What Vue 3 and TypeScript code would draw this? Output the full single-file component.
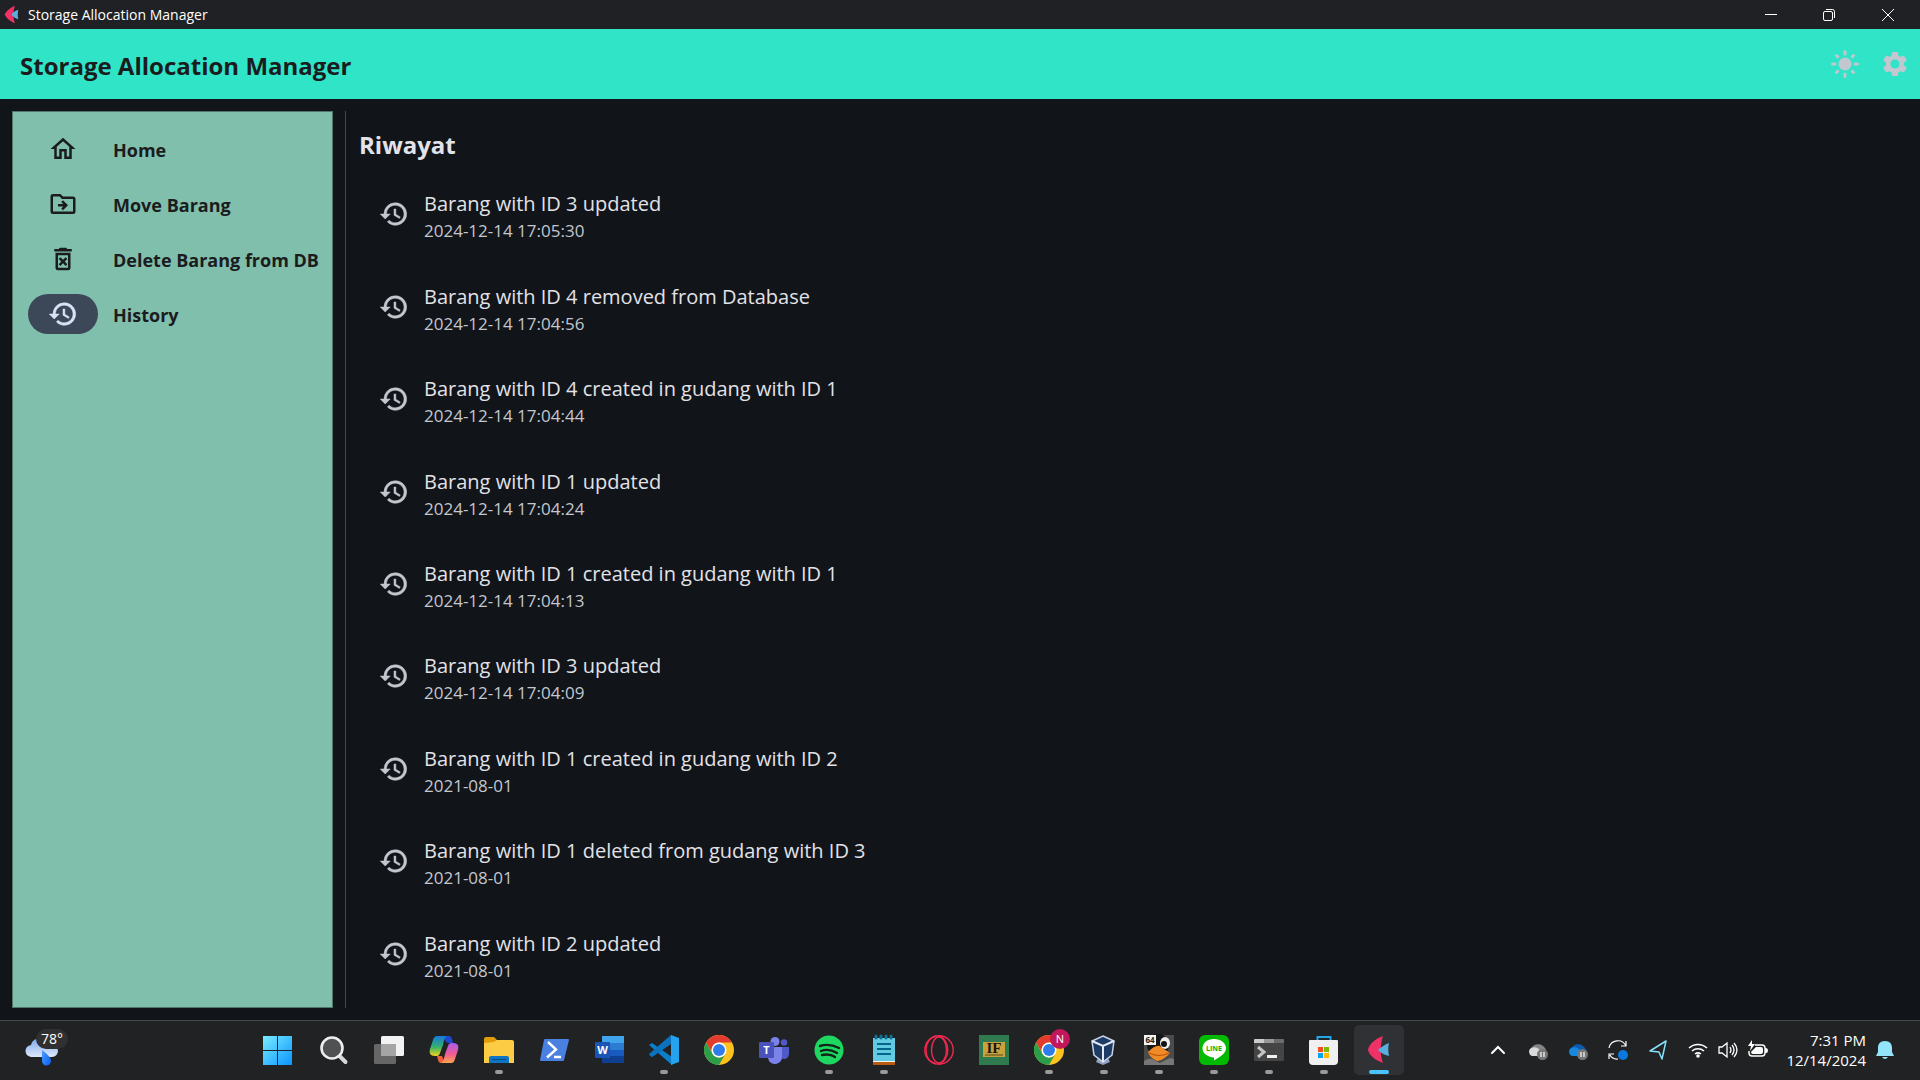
<script setup lang="ts">
import { ref } from 'vue'

interface NavItem {
  id: string
  label: string
  path: string
}

interface HistoryEntry {
  title: string
  time: string
}

const historyPath =
  'M13 3a9 9 0 0 0-9 9H1l3.900 3.900.1.1L9 12H6c0-3.900 3.100-7 7-7s7 3.100 7 7-3.100 7-7 7c-1.900 0-3.700-.8-4.900-2.100l-1.400 1.400A9 9 0 1 0 13 3zm-1 5v5l4.300 2.500.7-1.200-3.500-2.100V8z'

const navItems: NavItem[] = [
  {
    id: 'home',
    label: 'Home',
    path: 'M12 5.700l5 4.500V18h-2v-6H9v6H7v-7.800l5-4.500M12 3L2 12h3v8h6v-6h2v6h6v-8h3L12 3z',
  },
  {
    id: 'move',
    label: 'Move Barang',
    path: 'M20 6h-8l-2-2H4a2 2 0 0 0-2 2v12a2 2 0 0 0 2 2h16a2 2 0 0 0 2-2V8a2 2 0 0 0-2-2zm0 12H4V6h5.200l2 2H20v10zm-8-1l4-4-4-4-1.400 1.400 1.600 1.600H8v2h4.200l-1.600 1.600L12 17z',
  },
  {
    id: 'delete',
    label: 'Delete Barang from DB',
    path: 'M14.100 10.500L12 12.600l-2.100-2.100-1.400 1.400 2.100 2.100-2.100 2.100 1.400 1.400 2.100-2.100 2.100 2.100 1.400-1.400-2.100-2.100 2.100-2.100zM15.500 4l-1-1h-5l-1 1H5v2h14V4zM6 19a2 2 0 0 0 2 2h8a2 2 0 0 0 2-2V7H6v12zM8 9h8v10H8V9z',
  },
  { id: 'history', label: 'History', path: historyPath },
]

const activeNav = ref('history')

const entries: HistoryEntry[] = [
  { title: 'Barang with ID 3 updated', time: '2024-12-14 17:05:30' },
  { title: 'Barang with ID 4 removed from Database', time: '2024-12-14 17:04:56' },
  { title: 'Barang with ID 4 created in gudang with ID 1', time: '2024-12-14 17:04:44' },
  { title: 'Barang with ID 1 updated', time: '2024-12-14 17:04:24' },
  { title: 'Barang with ID 1 created in gudang with ID 1', time: '2024-12-14 17:04:13' },
  { title: 'Barang with ID 3 updated', time: '2024-12-14 17:04:09' },
  { title: 'Barang with ID 1 created in gudang with ID 2', time: '2021-08-01' },
  { title: 'Barang with ID 1 deleted from gudang with ID 3', time: '2021-08-01' },
  { title: 'Barang with ID 2 updated', time: '2021-08-01' },
]
</script>

<template>
  <div class="desktop">
    <div class="titlebar">
      <svg class="app-logo" viewBox="0 0 22 28" aria-hidden="true">
        <path d="M16 1C9 4 3 9 1 14c2 5 8 10 15 13-3-8-3-18 0-26z" fill="#ee3167" />
        <path d="M21 7c-4 1-8 4-10 7 2 3 6 6 10 7-1-5-1-9 0-14z" fill="#58b0de" />
      </svg>
      <span class="window-title">Storage Allocation Manager</span>
      <button class="window-button" aria-label="Minimize">
        <svg viewBox="0 0 14 14"><path d="M1 6.500h12" /></svg>
      </button>
      <button class="window-button" aria-label="Restore">
        <svg viewBox="0 0 14 14">
          <rect x="1.500" y="3.500" width="9" height="9" rx="1.500" />
          <path d="M4 1.500h6.500a2 2 0 0 1 2 2V10" />
        </svg>
      </button>
      <button class="window-button" aria-label="Close">
        <svg viewBox="0 0 14 14"><path d="M1 1l12 12M13 1L1 13" /></svg>
      </button>
    </div>

    <header class="appbar">
      <h1>Storage Allocation Manager</h1>
      <button class="appbar-button" aria-label="Theme">
        <svg viewBox="0 0 30 30">
          <circle cx="15" cy="15" r="6.500" fill="currentColor" />
          <path
            d="M15 2.500v2.500M15 25v2.500M2.500 15H5M25 15h2.500M6.500 6.500l1.200 1.200M22.300 22.300l1.200 1.200M6.500 23.500l1.200-1.200M22.300 7.700l1.200-1.200"
            fill="none" stroke="currentColor" stroke-width="3" stroke-linecap="round"
          />
        </svg>
      </button>
      <button class="appbar-button" aria-label="Settings">
        <svg viewBox="0 0 24 24">
          <path
            fill="currentColor"
            d="M19.140 12.940c.04-.3.06-.61.06-.94 0-.32-.02-.64-.07-.94l2.030-1.580c.18-.14.23-.41.12-.61l-1.920-3.320c-.12-.22-.37-.29-.59-.22l-2.390.96c-.5-.38-1.030-.7-1.620-.94l-.36-2.540c-.04-.24-.24-.41-.48-.41h-3.840c-.24 0-.43.17-.47.41l-.36 2.540c-.59.24-1.130.57-1.620.94l-2.390-.96c-.22-.08-.47 0-.59.22L2.740 8.870c-.12.21-.08.47.12.61l2.030 1.580c-.05.3-.09.63-.09.94s.02.64.07.94l-2.030 1.580c-.18.14-.23.41-.12.61l1.920 3.320c.12.22.37.29.59.22l2.390-.96c.5.38 1.030.7 1.620.94l.36 2.540c.05.24.24.41.48.41h3.840c.24 0 .44-.17.47-.41l.36-2.540c.59-.24 1.130-.56 1.620-.94l2.390.96c.22.08.47 0 .59-.22l1.920-3.320c.12-.22.07-.47-.12-.61l-2.010-1.580zM12 15.600a3.600 3.600 0 1 1 0-7.200 3.600 3.600 0 0 1 0 7.200z"
          />
        </svg>
      </button>
    </header>

    <div class="workspace">
      <nav class="sidebar" aria-label="Main">
        <button
          v-for="item in navItems"
          :key="item.id"
          class="nav-item"
          :class="{ active: item.id === activeNav }"
          @click="activeNav = item.id"
        >
          <span class="nav-icon">
            <svg viewBox="0 0 24 24"><path :d="item.path" fill="currentColor" /></svg>
          </span>
          <span class="nav-label">{{ item.label }}</span>
        </button>
      </nav>

      <main class="content">
        <h2>Riwayat</h2>
        <ul class="history">
          <li v-for="(entry, index) in entries" :key="index">
            <svg viewBox="0 0 24 24" aria-hidden="true"><path :d="historyPath" fill="currentColor" /></svg>
            <div class="entry">
              <div class="entry-title">{{ entry.title }}</div>
              <div class="entry-time">{{ entry.time }}</div>
            </div>
          </li>
        </ul>
      </main>
    </div>

    <footer class="taskbar">
      <button class="weather" aria-label="Weather">
        <svg viewBox="0 0 42 42">
          <defs>
            <linearGradient id="cloud" x1="0" y1="0" x2="0" y2="1">
              <stop offset="0" stop-color="#7ea6ec" /><stop offset="1" stop-color="#dde9fb" />
            </linearGradient>
            <linearGradient id="drop" x1="0" y1="0" x2="1" y2="1">
              <stop offset="0" stop-color="#4aa0ff" /><stop offset="1" stop-color="#0a5cf0" />
            </linearGradient>
          </defs>
          <path d="M6 28a6 6 0 0 1-1-12c2-9 15-9 18 0h3a6 6 0 0 1 0 12z" fill="url(#cloud)" />
          <path d="M16 21c4 3 9 7 9 11a4.500 4.500 0 0 1-9 0z" fill="url(#drop)" />
        </svg>
        <span class="temperature">78°</span>
      </button>

      <div class="apps">
        <button class="task start" aria-label="Start">
          <svg viewBox="0 0 30 30">
            <defs>
              <linearGradient id="start" x1="0" y1="0" x2="30" y2="30" gradientUnits="userSpaceOnUse">
                <stop offset="0" stop-color="#7cf0ff" /><stop offset="1" stop-color="#0a94ff" />
              </linearGradient>
            </defs>
            <path d="M1 1h14v14H1zM16 1h14v14H16zM1 16h14v14H1zM16 16h14v14H16z" fill="url(#start)" />
          </svg>
        </button>
        <button class="task" aria-label="Search">
          <svg viewBox="0 0 30 30">
            <path d="M19 19.500l7.500 7.500" stroke="#d5d9db" stroke-width="4" stroke-linecap="round" />
            <circle cx="13" cy="13" r="10.500" fill="#505152" stroke="#eceeef" stroke-width="2.600" />
          </svg>
        </button>
        <button class="task" aria-label="Task view">
          <svg viewBox="0 0 30 30">
            <rect x="0" y="9" width="22" height="20" rx="1.500" fill="#666" />
            <rect x="7" y="1" width="23" height="20" rx="1.500" fill="#f2f2f2" />
            <path d="M7 9h15v12H7z" fill="#a5a5a5" />
          </svg>
        </button>
        <button class="task" aria-label="Copilot">
          <svg viewBox="0 0 30 30">
            <defs>
              <linearGradient id="cp1" x1="0" y1="0" x2="0" y2="1">
                <stop offset="0" stop-color="#1679e0" /><stop offset=".55" stop-color="#35b26a" /><stop offset="1" stop-color="#f4d51b" />
              </linearGradient>
              <linearGradient id="cp2" x1="0" y1="0" x2="0" y2="1">
                <stop offset="0" stop-color="#a95cf0" /><stop offset=".55" stop-color="#ef5b93" /><stop offset="1" stop-color="#ffa54f" />
              </linearGradient>
            </defs>
            <path d="M14 1h6c2 0 3 2 4 7h-4c-3 0-4-2-6-7z" fill="#1d48d1" />
            <path d="M8 21h5l3 7h-4c-3 0-3-4-4-7z" fill="#f0603c" />
            <path d="M8 1h10c-3 2-3 5-4 9l-3 8c-1 3-2 3-5 3-5 0-6-3-5-7L4 5c1-3 2-4 4-4z" fill="url(#cp1)" />
            <path d="M22 28H12c3-2 3-5 4-9l3-8c1-3 2-3 5-3 5 0 6 3 5 7l-3 9c-1 3-2 4-4 4z" fill="url(#cp2)" />
          </svg>
        </button>
        <button class="task running" aria-label="File Explorer">
          <svg viewBox="0 0 30 30">
            <path d="M0 4a2 2 0 0 1 2-2h8l3 3h15v6H0z" fill="#e19c0a" />
            <path d="M0 8l10-1 3-2h15a2 2 0 0 1 2 2v21H0z" fill="#fdcc45" />
            <path d="M5 28v-5a2 2 0 0 1 2-2h16a2 2 0 0 1 2 2v5z" fill="#0e74c4" />
            <path d="M8 24.500h14" stroke="#064a80" />
          </svg>
        </button>
        <button class="task" aria-label="PowerShell">
          <svg viewBox="0 0 30 30">
            <path d="M6 4h23q1 0 1 1l-5 20q0 1-1 1H2q-1 0-1-1L5 5q0-1 1-1z" fill="#4a80e0" />
            <path d="M9 7l8 7.500-9 8M15 22h7" fill="none" stroke="#fff" stroke-width="2.400" />
          </svg>
        </button>
        <button class="task" aria-label="Word">
          <svg viewBox="0 0 30 30">
            <path d="M8 1h22v7H8z" fill="#41a5ee" /><path d="M8 8h22v7H8z" fill="#2b7cd3" />
            <path d="M8 15h22v6H8z" fill="#185abd" /><path d="M8 21h22v7H8z" fill="#103f91" />
            <rect x="1" y="7" width="15" height="16" rx="1" fill="#1a55b5" />
            <text x="8.500" y="19" font-size="11" font-weight="700" text-anchor="middle" fill="#fff">W</text>
          </svg>
        </button>
        <button class="task running" aria-label="Visual Studio Code">
          <svg viewBox="0 0 30 30">
            <path d="M0 10l3-2 20 14v8z" fill="#0b7fcb" />
            <path d="M0 20l3 2L23 8V0z" fill="#0a6ab2" />
            <path d="M0 19L22 0v9L3 22z" fill="#0b72bd" />
            <path d="M22 0l8 3v24l-8 3z" fill="#26a3ee" />
          </svg>
        </button>
        <button class="task" aria-label="Chrome">
          <svg viewBox="0 0 30 30">
            <circle cx="15" cy="15" r="15" fill="#fcc31e" />
            <path d="M2 7.500A15 15 0 0 1 28 7.500H15a7.500 7.500 0 0 0-7 10z" fill="#e33b2e" />
            <path d="M2 7.500A15 15 0 0 0 15 30l6.500-11.300a7.500 7.500 0 0 1-13 0z" fill="#2c9e4b" />
            <circle cx="15" cy="15" r="7.500" fill="#fff" /><circle cx="15" cy="15" r="6" fill="#2f7de9" />
          </svg>
        </button>
        <button class="task" aria-label="Teams">
          <svg viewBox="0 0 30 30">
            <circle cx="25" cy="7.500" r="3.200" fill="#5059c9" />
            <path d="M20 12h10v7a5 5 0 0 1-8 4z" fill="#5059c9" />
            <circle cx="16" cy="6.500" r="4.500" fill="#7b83eb" />
            <path d="M9 12h14v9a7 7 0 0 1-14 2z" fill="#7b83eb" />
            <rect x="0" y="7" width="15" height="16" rx="1" fill="#4a52bb" />
            <text x="7.500" y="19" font-size="11" font-weight="700" text-anchor="middle" fill="#fff">T</text>
          </svg>
        </button>
        <button class="task running" aria-label="Spotify">
          <svg viewBox="0 0 30 30">
            <circle cx="15" cy="15" r="14.500" fill="#1ed760" />
            <path d="M6 11c6-2 13-1 19 2M7 16c5-2 11-1 16 2M8 20c5-1 9-1 13 2" fill="none" stroke="#10241a" stroke-width="2.400" stroke-linecap="round" />
          </svg>
        </button>
        <button class="task running" aria-label="Notepad">
          <svg viewBox="0 0 30 30">
            <path d="M4 26h22v4H4z" fill="#b85b12" /><path d="M4 25h22v2H4z" fill="#f3f3f3" />
            <path d="M4 3h22v23H4z" fill="#62cbe2" />
            <path d="M8 9h14M8 14h14M8 19h14" stroke="#07648a" stroke-width="2" />
            <path d="M7 1v2M12 1v2M17 1v2M22 1v2" stroke="#0d7291" stroke-width="3" stroke-linecap="round" />
          </svg>
        </button>
        <button class="task" aria-label="Opera">
          <svg viewBox="0 0 30 30" fill="none" stroke="#ee2950" stroke-width="1.400">
            <circle cx="15" cy="15" r="14.200" />
            <ellipse cx="15" cy="15" rx="7.500" ry="13" />
            <path d="M12 1c-7 2-10 8-10 14s3 12 10 14M14 1c13 3 13 25 0 28" />
          </svg>
        </button>
        <button class="task" aria-label="Informatics">
          <svg viewBox="0 0 30 30">
            <path d="M0 0h30v30H0z" fill="#307a50" /><path d="M4 7h22v15H4z" fill="#c8a23c" />
            <text x="15" y="18" class="serif" font-size="15" font-weight="700" text-anchor="middle" fill="#191712">IF</text>
            <path d="M6 20h18" stroke="#5d4b1d" />
          </svg>
        </button>
        <button class="task running" aria-label="Chrome, profile N">
          <svg viewBox="0 0 30 30">
            <circle cx="15" cy="15" r="15" fill="#fcc31e" />
            <path d="M2 7.500A15 15 0 0 1 28 7.500H15a7.500 7.500 0 0 0-7 10z" fill="#e33b2e" />
            <path d="M2 7.500A15 15 0 0 0 15 30l6.500-11.300a7.500 7.500 0 0 1-13 0z" fill="#2c9e4b" />
            <circle cx="15" cy="15" r="7.500" fill="#fff" /><circle cx="15" cy="15" r="6" fill="#2f7de9" />
            <circle cx="26" cy="4" r="10" fill="#c2185b" />
            <text x="26" y="8" font-size="11" text-anchor="middle" fill="#fff">N</text>
          </svg>
        </button>
        <button class="task running" aria-label="VirtualBox">
          <svg viewBox="0 0 30 30">
            <path d="M9 23h10l2 4-7 3-7-3z" fill="#8fa3c4" />
            <path d="M14 1l11 5-2 14-9 7-9-7L3 6z" fill="#1e3b66" stroke="#c5d3e8" stroke-width="1.500" />
            <path d="M3 6l11 5 11-5M14 11v16" fill="none" stroke="#e3eaf5" stroke-width="2" />
          </svg>
        </button>
        <button class="task running" aria-label="Penguin">
          <svg viewBox="0 0 30 30">
            <path d="M0 0h30v30H0z" fill="#4b4b4b" /><circle cx="14" cy="10" r="11" fill="#161616" />
            <ellipse cx="21" cy="8" rx="5" ry="6" fill="#eee" /><circle cx="20" cy="9" r="3" fill="#111" />
            <path d="M0 26q6-4 10-1l6 3 10-5 4 1v6H0z" fill="#777" />
            <path d="M4 17q9-9 13-5l9 6q-6 7-13 8-7-3-9-9z" fill="#f08a24" />
            <path d="M5 18q10 5 20 0" fill="none" stroke="#b94d0b" />
            <path d="M0 0h12v10H0z" fill="#f4f4f4" />
            <text x="6" y="8" font-size="8" font-weight="700" text-anchor="middle" fill="#222">64</text>
          </svg>
        </button>
        <button class="task running" aria-label="LINE">
          <svg viewBox="0 0 30 30">
            <rect width="30" height="30" rx="6" fill="#00b900" />
            <path d="M15 4c7 0 12 4 12 9.500 0 5-7 9-12 12v-3C8 22 3.500 18 3.500 13.500 3.500 8 8 4 15 4z" fill="#fff" />
            <text x="15" y="16" font-size="7" font-weight="700" text-anchor="middle" fill="#00b900">LINE</text>
          </svg>
        </button>
        <button class="task running" aria-label="Terminal">
          <svg viewBox="0 0 30 30">
            <rect y="4" width="30" height="22" rx="1.500" fill="#454545" />
            <path d="M0 8V5q0-1 1-1h9v4z" fill="#ccc" /><path d="M10 4h10v4H10z" fill="#999" /><path d="M20 4h9q1 0 1 1v3H20z" fill="#6b6b6b" />
            <path d="M4 12l6 5-6 5" fill="none" stroke="#c4c4c4" stroke-width="3" /><path d="M13 21.500h10" stroke="#f1f1f1" stroke-width="3" />
          </svg>
        </button>
        <button class="task running" aria-label="Microsoft Store">
          <svg viewBox="0 0 30 30">
            <path d="M8.500 7V2h13v5" fill="none" stroke="#22a7e6" stroke-width="2" />
            <path d="M0 6q0-1 1-1h27q1 0 1 1v20a4 4 0 0 1-4 4H4a4 4 0 0 1-4-4z" fill="#f0f0f0" />
            <path d="M9 12h5v5H9z" fill="#f25022" /><path d="M15 12h5v5h-5z" fill="#7fba00" />
            <path d="M9 18h5v5H9z" fill="#00a4ef" /><path d="M15 18h5v5h-5z" fill="#ffb900" />
          </svg>
        </button>
        <button class="task current" aria-label="Storage Allocation Manager">
          <svg viewBox="0 0 30 30">
            <path d="M19 1C11 4 5 9 4 15c1 5 7 10 15 13-3-8-3-18 0-27z" fill="#ee3167" />
            <path d="M25 8c-5 2-8 4-11 7 3 3 6 5 11 6-1-5-1-9 0-13z" fill="#58b0de" />
          </svg>
        </button>
      </div>

      <div class="tray">
        <button class="tray-wide" aria-label="Show hidden icons">
          <svg viewBox="0 0 20 20"><path d="M4 13l6-6 6 6" fill="none" stroke="#fff" stroke-width="2" stroke-linecap="round" /></svg>
        </button>
        <button class="tray-wide" aria-label="OneDrive personal, paused">
          <svg viewBox="0 0 20 20">
            <path d="M3 9c2-6 12-7 15 1l-3 4H6z" fill="#858585" />
            <path d="M4 16a4.500 4.500 0 0 1-1-8c4-2 8 0 9 3v5z" fill="#dadada" />
            <circle cx="14.500" cy="14.500" r="5.500" fill="#777" /><path d="M13 12v5M16 12v5" stroke="#fff" stroke-width="1.200" />
          </svg>
        </button>
        <button class="tray-wide" aria-label="OneDrive, paused">
          <svg viewBox="0 0 20 20">
            <path d="M3 9c2-6 12-7 15 1l-3 4H6z" fill="#0a5aad" />
            <path d="M4 16a4.500 4.500 0 0 1-1-8c4-2 8 0 9 3v5z" fill="#1687df" />
            <circle cx="14.500" cy="14.500" r="5.500" fill="#777" /><path d="M13 12v5M16 12v5" stroke="#fff" stroke-width="1.200" />
          </svg>
        </button>
        <button class="tray-wide" aria-label="Update">
          <svg viewBox="0 0 20 20">
            <path d="M1 8a9 9 0 0 1 17-2M18 1v5h-5M1 19v-5h5M2 15a8 8 0 0 0 8 4" fill="none" stroke="#fff" stroke-width="1.200" />
            <circle cx="15" cy="15" r="5" fill="#0a78dc" />
          </svg>
        </button>
        <button class="tray-wide" aria-label="Location">
          <svg viewBox="0 0 20 20"><path d="M18 1L14 19l-3-7-9-1z" fill="none" stroke="#86e2fa" stroke-width="1.500" stroke-linejoin="round" /></svg>
        </button>
        <button class="tray-narrow" aria-label="Network">
          <svg viewBox="0 0 20 20">
            <path d="M1 8a13 13 0 0 1 18 0M4 11a9 9 0 0 1 12 0M7 14a5 5 0 0 1 6 0" fill="none" stroke="#fff" stroke-width="1.500" />
            <circle cx="10" cy="16" r="1.800" fill="#fff" />
          </svg>
        </button>
        <button class="tray-narrow" aria-label="Volume">
          <svg viewBox="0 0 20 20">
            <path d="M1 7h3l5-4v14l-5-4H1zM12 7q2 3 0 6M14 5q4 5 0 10M16 3q6 7 0 14" fill="none" stroke="#fff" stroke-width="1.300" />
          </svg>
        </button>
        <button class="tray-narrow" aria-label="Battery">
          <svg viewBox="0 0 20 20">
            <path d="M7 5h7a3 3 0 0 1 3 3v5a3 3 0 0 1-3 3H4a3 3 0 0 1-3-3v-2" fill="none" stroke="#fff" stroke-width="1.400" />
            <path d="M4 11l4-4h5q2 0 2 2v3q0 2-2 2H5q-2 0-2-2zM17 8h1q2 0 2 2.500T18 13h-1zM4 0L0 6h3l-1 5 5-7H4z" fill="#fff" />
          </svg>
        </button>
        <button class="clock"><span>7:31 PM</span><span>12/14/2024</span></button>
        <button class="bell" aria-label="Notifications">
          <svg viewBox="0 0 20 20">
            <path d="M10 1c5 0 7 3 7 7v4l2 4H1l2-4V8c0-4 2-7 7-7zM7 17h6q-3 4-6 0z" fill="#92e5fb" />
          </svg>
        </button>
      </div>
    </footer>
  </div>
</template>

<style>
body {
  background: #111418;
}
</style>

<style scoped>
.desktop {
  display: flex;
  flex-direction: column;
  min-height: 100vh;
  background: #111418;
  color: #e2e2e8;
  font-family: 'Open Sans', 'Noto Sans', sans-serif;
}

button {
  display: flex;
  align-items: center;
  justify-content: center;
  padding: 0;
  border: 0;
  background: none;
  color: inherit;
  font: inherit;
}

svg {
  display: block;
  flex: none;
  overflow: visible;
}

.titlebar {
  display: flex;
  align-items: center;
  height: 29px;
  padding-right: 2px;
  background: #1f2124;
  color: #fff;
}

.app-logo {
  width: 15px;
  height: 19px;
  margin: 0 9px 0 4px;
}

.window-title {
  flex: 1;
  font-size: 14px;
  line-height: 20px;
}

.window-button {
  width: 58px;
  height: 29px;
}

.window-button:last-child {
  width: 60px;
}

.window-button svg {
  width: 14px;
  height: 14px;
  fill: none;
  stroke: #fff;
  stroke-width: 1;
}

.appbar {
  display: flex;
  align-items: center;
  height: 70px;
  padding-left: 20px;
  background: #2fe4c7;
}

.appbar h1 {
  flex: 1;
  margin: 0;
  padding-top: 4px;
  color: #1a1c1e;
  font-size: 24px;
  font-weight: 700;
  line-height: 36px;
}

.appbar-button {
  width: 50px;
  height: 50px;
  color: #c3c7cf;
}

.appbar-button svg {
  width: 30px;
  height: 30px;
}

.workspace {
  display: flex;
  flex: 1;
  gap: 12px;
  padding: 12px;
}

.sidebar {
  display: flex;
  flex: none;
  flex-direction: column;
  gap: 15px;
  box-sizing: border-box;
  width: 321px;
  padding: 17px 10px 17px 15px;
  border: 1px solid #51776b;
  background: #81bfad;
}

.nav-item {
  justify-content: flex-start;
  gap: 15px;
  height: 40px;
  color: #1a1c1e;
  font-size: 18px;
  font-weight: 700;
  line-height: 24px;
  white-space: nowrap;
}

.nav-label {
  padding-top: 1px;
}

.nav-icon {
  display: flex;
  flex: none;
  align-items: center;
  justify-content: center;
  width: 70px;
  height: 40px;
  border-radius: 20px;
}

.nav-icon svg {
  width: 30px;
  height: 30px;
}

.active .nav-icon {
  background: #3c4858;
  color: #d7e3f8;
}

.active .nav-icon path,
.history path {
  stroke: currentColor;
  stroke-width: 0.4;
}

.content {
  display: flex;
  flex: 1;
  flex-direction: column;
  padding-left: 13px;
  border-left: 1px solid #43474e;
}

.content h2 {
  margin: 16px 0 5px;
  font-size: 24px;
  font-weight: 700;
  line-height: 36px;
}

.history {
  display: flex;
  flex: 1;
  flex-direction: column;
  margin: 0;
  padding: 0 20px 8px;
  list-style: none;
}

.history li {
  display: flex;
  flex: 1;
  align-items: center;
  gap: 15px;
}

.history svg {
  width: 30px;
  height: 30px;
  color: #c3c7cf;
}

.entry {
  padding-top: 6px;
}

.entry-title {
  font-size: 20px;
  line-height: 28px;
}

.entry-time {
  color: #c3c7cf;
  font-size: 17px;
  line-height: 26px;
}

.taskbar {
  display: flex;
  align-items: center;
  box-sizing: border-box;
  height: 60px;
  padding-bottom: 2px;
  border-top: 1px solid #484a4c;
  background: #212223;
  color: #fff;
}

.weather {
  position: relative;
  justify-content: flex-start;
  width: 252px;
  height: 56px;
  padding-left: 26px;
}

.weather svg {
  width: 42px;
  height: 42px;
}

.temperature {
  position: absolute;
  top: 7px;
  left: 36px;
  padding: 0 5px;
  border-radius: 10px;
  background: #303030;
  font-size: 14px;
  line-height: 20px;
}

.apps {
  display: flex;
  flex: 1;
  gap: 5px;
}

.task {
  position: relative;
  width: 50px;
  height: 50px;
  border-radius: 5px;
}

.start {
  margin-right: 2px;
}

.task svg {
  width: 30px;
  height: 30px;
}

.task .serif {
  font-family: 'Liberation Serif', serif;
}

.running::after,
.current::after {
  position: absolute;
  bottom: 1px;
  left: 21px;
  width: 8px;
  height: 4px;
  border-radius: 2px;
  background: #9a9a9a;
  content: '';
}

.current {
  background: #303134;
}

.current::after {
  left: 15px;
  width: 20px;
  background: #4cc2ff;
}

.tray {
  display: flex;
  align-items: center;
  padding-right: 25px;
}

.tray svg {
  width: 20px;
  height: 20px;
}

.tray-wide {
  width: 40px;
  height: 50px;
}

.tray-narrow {
  width: 30px;
  height: 50px;
}

.tray-wide + .tray-narrow {
  margin-left: 5px;
}

.clock {
  flex-direction: column;
  align-items: flex-end;
  width: 93px;
  font-size: 15px;
  line-height: 20px;
}

.bell {
  width: 20px;
  height: 50px;
  margin-left: 9px;
}
</style>
